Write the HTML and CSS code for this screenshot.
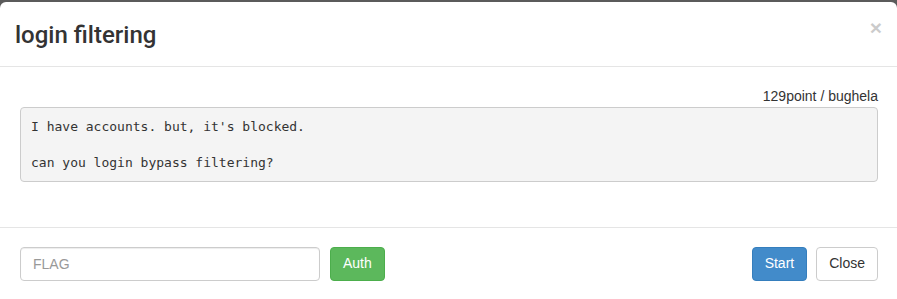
FILE: index.html
```html
<!DOCTYPE html>
<html lang="en">
<head>
    <meta charset="UTF-8">
    <title>login filtering</title>
    <link rel="stylesheet" href="styles.css">
</head>
<body>
    <div class="modal">
        <div class="modal-header">
            <h3 class="modal-title">login filtering</h3>
            <button class="close" type="button">&times;</button>
        </div>
        <div class="modal-body">
            <p class="meta">129point / bughela</p>
            <pre class="desc">I have accounts. but, it's blocked.

can you login bypass filtering?</pre>
        </div>
        <div class="modal-footer">
            <div class="auth-form">
                <input class="form-control" type="text" placeholder="FLAG">
                <button class="btn btn-success" type="button">Auth</button>
            </div>
            <div class="actions">
                <button class="btn btn-primary" type="button">Start</button>
                <button class="btn btn-default" type="button">Close</button>
            </div>
        </div>
    </div>
</body>
</html>
```

FILE: styles.css
```css
body {
    margin: 0;
    padding-top: 2px;
    background-color: #5b5b5b;
    font-family: "Liberation Sans", Arial, sans-serif;
    font-size: 14px;
    line-height: 1.42857;
    color: #333;
}
.modal {
    background: #fff;
    border-radius: 6px;
    height: 310px;
    overflow: hidden;
}
.modal-header {
    display: flex;
    align-items: center;
    justify-content: space-between;
    height: 64px;
    padding: 0 15px;
    border-bottom: 1px solid #e5e5e5;
}
.modal-title {
    margin: 2px 0 0;
    font-family: Roboto, "Liberation Sans", sans-serif;
    font-size: 24px;
    font-weight: 500;
    color: #333;
    line-height: 1.1;
}
.close {
    background: none;
    border: none;
    padding: 0;
    margin-top: -14px;
    font-size: 21px;
    font-weight: bold;
    line-height: 1;
    color: #000;
    opacity: 0.2;
    cursor: pointer;
}
.modal-body {
    padding: 20px 19px 45px 20px;
}
.meta {
    margin: 0;
    text-align: right;
}
.desc {
    margin: 0;
    padding: 10px 10px 9px;
    font-family: "DejaVu Sans Mono", monospace;
    font-size: 13px;
    line-height: 18px;
    color: #333;
    background-color: #f4f4f4;
    border: 1px solid #ccc;
    border-radius: 4px;
}
.modal-footer {
    display: flex;
    justify-content: space-between;
    align-items: center;
    padding: 19px 19px 19px 20px;
    border-top: 1px solid #e5e5e5;
}
.auth-form, .actions {
    display: flex;
    gap: 10px;
}
.actions {
    gap: 9px;
}
.form-control {
    box-sizing: border-box;
    width: 300px;
    height: 34px;
    padding: 6px 12px;
    font-family: inherit;
    font-size: 14px;
    color: #555;
    border: 1px solid #ccc;
    border-radius: 4px;
    box-shadow: inset 0 1px 1px rgba(0,0,0,0.075);
}
.form-control::placeholder {
    color: #999;
}
.btn {
    height: 34px;
    padding: 6px 12px;
    font-family: inherit;
    font-size: 14px;
    line-height: 1.42857;
    border: 1px solid transparent;
    border-radius: 4px;
    cursor: pointer;
}
.btn-success {
    color: #fff;
    background-color: #5cb85c;
    border-color: #4cae4c;
}
.btn-primary {
    color: #fff;
    background-color: #428bca;
    border-color: #357ebd;
}
.btn-default {
    color: #333;
    background-color: #fff;
    border-color: #ccc;
}
```
